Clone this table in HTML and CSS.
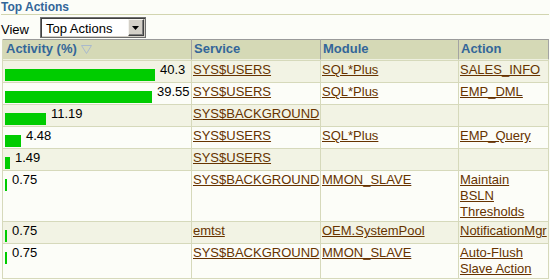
FILE: index.html
```html
<!DOCTYPE html>
<html lang="en">
<head>
<meta charset="utf-8">
<title>Top Actions</title>
<link rel="stylesheet" href="styles.css">
</head>
<body>
<div class="page">
  <h2 class="title">Top Actions</h2>
  <div class="view-row">
    <span class="view-label">View</span>
    <div class="combo" role="combobox" aria-expanded="false">
      <span class="combo-value">Top Actions</span>
      <span class="combo-btn"><svg width="7" height="4" viewBox="0 0 7 4"><path d="M0 0H7L3.5 4Z" fill="#000"/></svg></span>
    </div>
  </div>
  <table class="grid">
    <colgroup>
      <col class="c-act"><col class="c-svc"><col class="c-mod"><col class="c-action">
    </colgroup>
    <thead>
      <tr>
        <th>Activity (%) <svg class="sort" width="11" height="9" viewBox="0 0 11 9"><path d="M0.5 0.5H10.5L5.5 8.5Z" fill="none" stroke="#a9b9cc" stroke-width="1"/></svg></th>
        <th>Service</th>
        <th>Module</th>
        <th>Action</th>
      </tr>
    </thead>
    <tbody>
      <tr class="band">
        <td class="act"><span class="bar" style="width:150px"></span>40.3</td>
        <td><a href="#">SYS$USERS</a></td>
        <td><a href="#">SQL*Plus</a></td>
        <td><a href="#">SALES_INFO</a></td>
      </tr>
      <tr>
        <td class="act"><span class="bar" style="width:147px"></span>39.55</td>
        <td><a href="#">SYS$USERS</a></td>
        <td><a href="#">SQL*Plus</a></td>
        <td><a href="#">EMP_DML</a></td>
      </tr>
      <tr class="band">
        <td class="act"><span class="bar" style="width:41px"></span>11.19</td>
        <td><a href="#">SYS$BACKGROUND</a></td>
        <td></td>
        <td></td>
      </tr>
      <tr>
        <td class="act"><span class="bar" style="width:16px"></span>4.48</td>
        <td><a href="#">SYS$USERS</a></td>
        <td><a href="#">SQL*Plus</a></td>
        <td><a href="#">EMP_Query</a></td>
      </tr>
      <tr class="band">
        <td class="act"><span class="bar" style="width:5px"></span>1.49</td>
        <td><a href="#">SYS$USERS</a></td>
        <td></td>
        <td></td>
      </tr>
      <tr>
        <td class="act"><span class="bar" style="width:2px"></span>0.75</td>
        <td><a href="#">SYS$BACKGROUND</a></td>
        <td><a href="#">MMON_SLAVE</a></td>
        <td><a href="#">Maintain<br>BSLN Thresholds</a></td>
      </tr>
      <tr class="band">
        <td class="act"><span class="bar" style="width:2px"></span>0.75</td>
        <td><a href="#">emtst</a></td>
        <td><a href="#">OEM.SystemPool</a></td>
        <td><a href="#">NotificationMgr</a></td>
      </tr>
      <tr>
        <td class="act"><span class="bar" style="width:2px"></span>0.75</td>
        <td><a href="#">SYS$BACKGROUND</a></td>
        <td><a href="#">MMON_SLAVE</a></td>
        <td><a href="#">Auto-Flush Slave Action</a></td>
      </tr>
    </tbody>
  </table>
</div>
</body>
</html>
```
FILE: styles.css
```css
* { box-sizing: border-box; }

html, body {
  margin: 0;
  padding: 0;
  background: #fcfdf8;
}

body {
  width: 550px;
  height: 280px;
  overflow: hidden;
  font-family: "Liberation Sans", Arial, sans-serif;
  font-size: 13px;
  line-height: 16px;
  color: #000;
}

.page {
  padding: 0 1px;
}

.title {
  margin: 0;
  padding-top: 1px;
  font-size: 12px;
  line-height: 13px;
  font-weight: bold;
  color: #336699;
  border-bottom: 1px solid #d2d5b0;
}

.view-row {
  display: flex;
  align-items: flex-start;
  padding-top: 2px;
}

.view-label {
  margin-top: 5px;
  margin-right: 11px;
}

.combo {
  display: flex;
  width: 106px;
  height: 21px;
  border: 1px solid #6e6e6e;
  box-shadow: inset 1px 1px 0 #404040, inset -1px -1px 0 #d4d0c8;
  background: #fff;
  padding: 1px;
}

.combo-value {
  flex: 1;
  padding: 1px 0 0 4px;
  line-height: 17px;
}

.combo-btn {
  display: flex;
  align-items: center;
  justify-content: center;
  width: 16px;
  height: 17px;
  background: #d4d0c8;
  border-style: solid;
  border-width: 1px;
  border-color: #f4f3ef #404040 #404040 #f4f3ef;
  box-shadow: inset -1px -1px 0 #808080;
}

.grid {
  margin: 1px 0 0 1px;
  width: 547px;
  table-layout: fixed;
  border-collapse: separate;
  border-spacing: 0;
  border-left: 1px solid #d6d9bb;
}

.c-act { width: 189px; }
.c-svc { width: 129px; }
.c-mod { width: 138px; }
.c-action { width: 90px; }

.grid th {
  background: #d5d9b6;
  color: #336699;
  font-weight: bold;
  text-align: left;
  padding: 1px 2px 2px;
  border-top: 1px solid #9a9a9a;
  border-right: 1px solid #a3a3a3;
  border-bottom: 1px solid #eef0e0;
  white-space: nowrap;
}

.grid th:first-child {
  padding-left: 3px;
}

.sort {
  vertical-align: -1px;
  margin-left: 1px;
}

.grid td {
  vertical-align: top;
  padding: 1px 1px;
  border-top: 1px solid #d6d9bb;
  border-right: 1px solid #d6d9bb;
  background: #fcfdf8;
}

.grid tr.band td {
  background: #f2f3e4;
}

.grid tbody tr:last-child td {
  border-bottom: 1px solid #d6d9bb;
}

.grid td.act {
  padding-left: 2px;
  white-space: nowrap;
}

.bar {
  display: inline-block;
  height: 12px;
  margin-right: 5px;
  background: #00cc00;
  vertical-align: -7px;
}

.grid a {
  color: #663300;
  text-decoration: underline;
}
```
